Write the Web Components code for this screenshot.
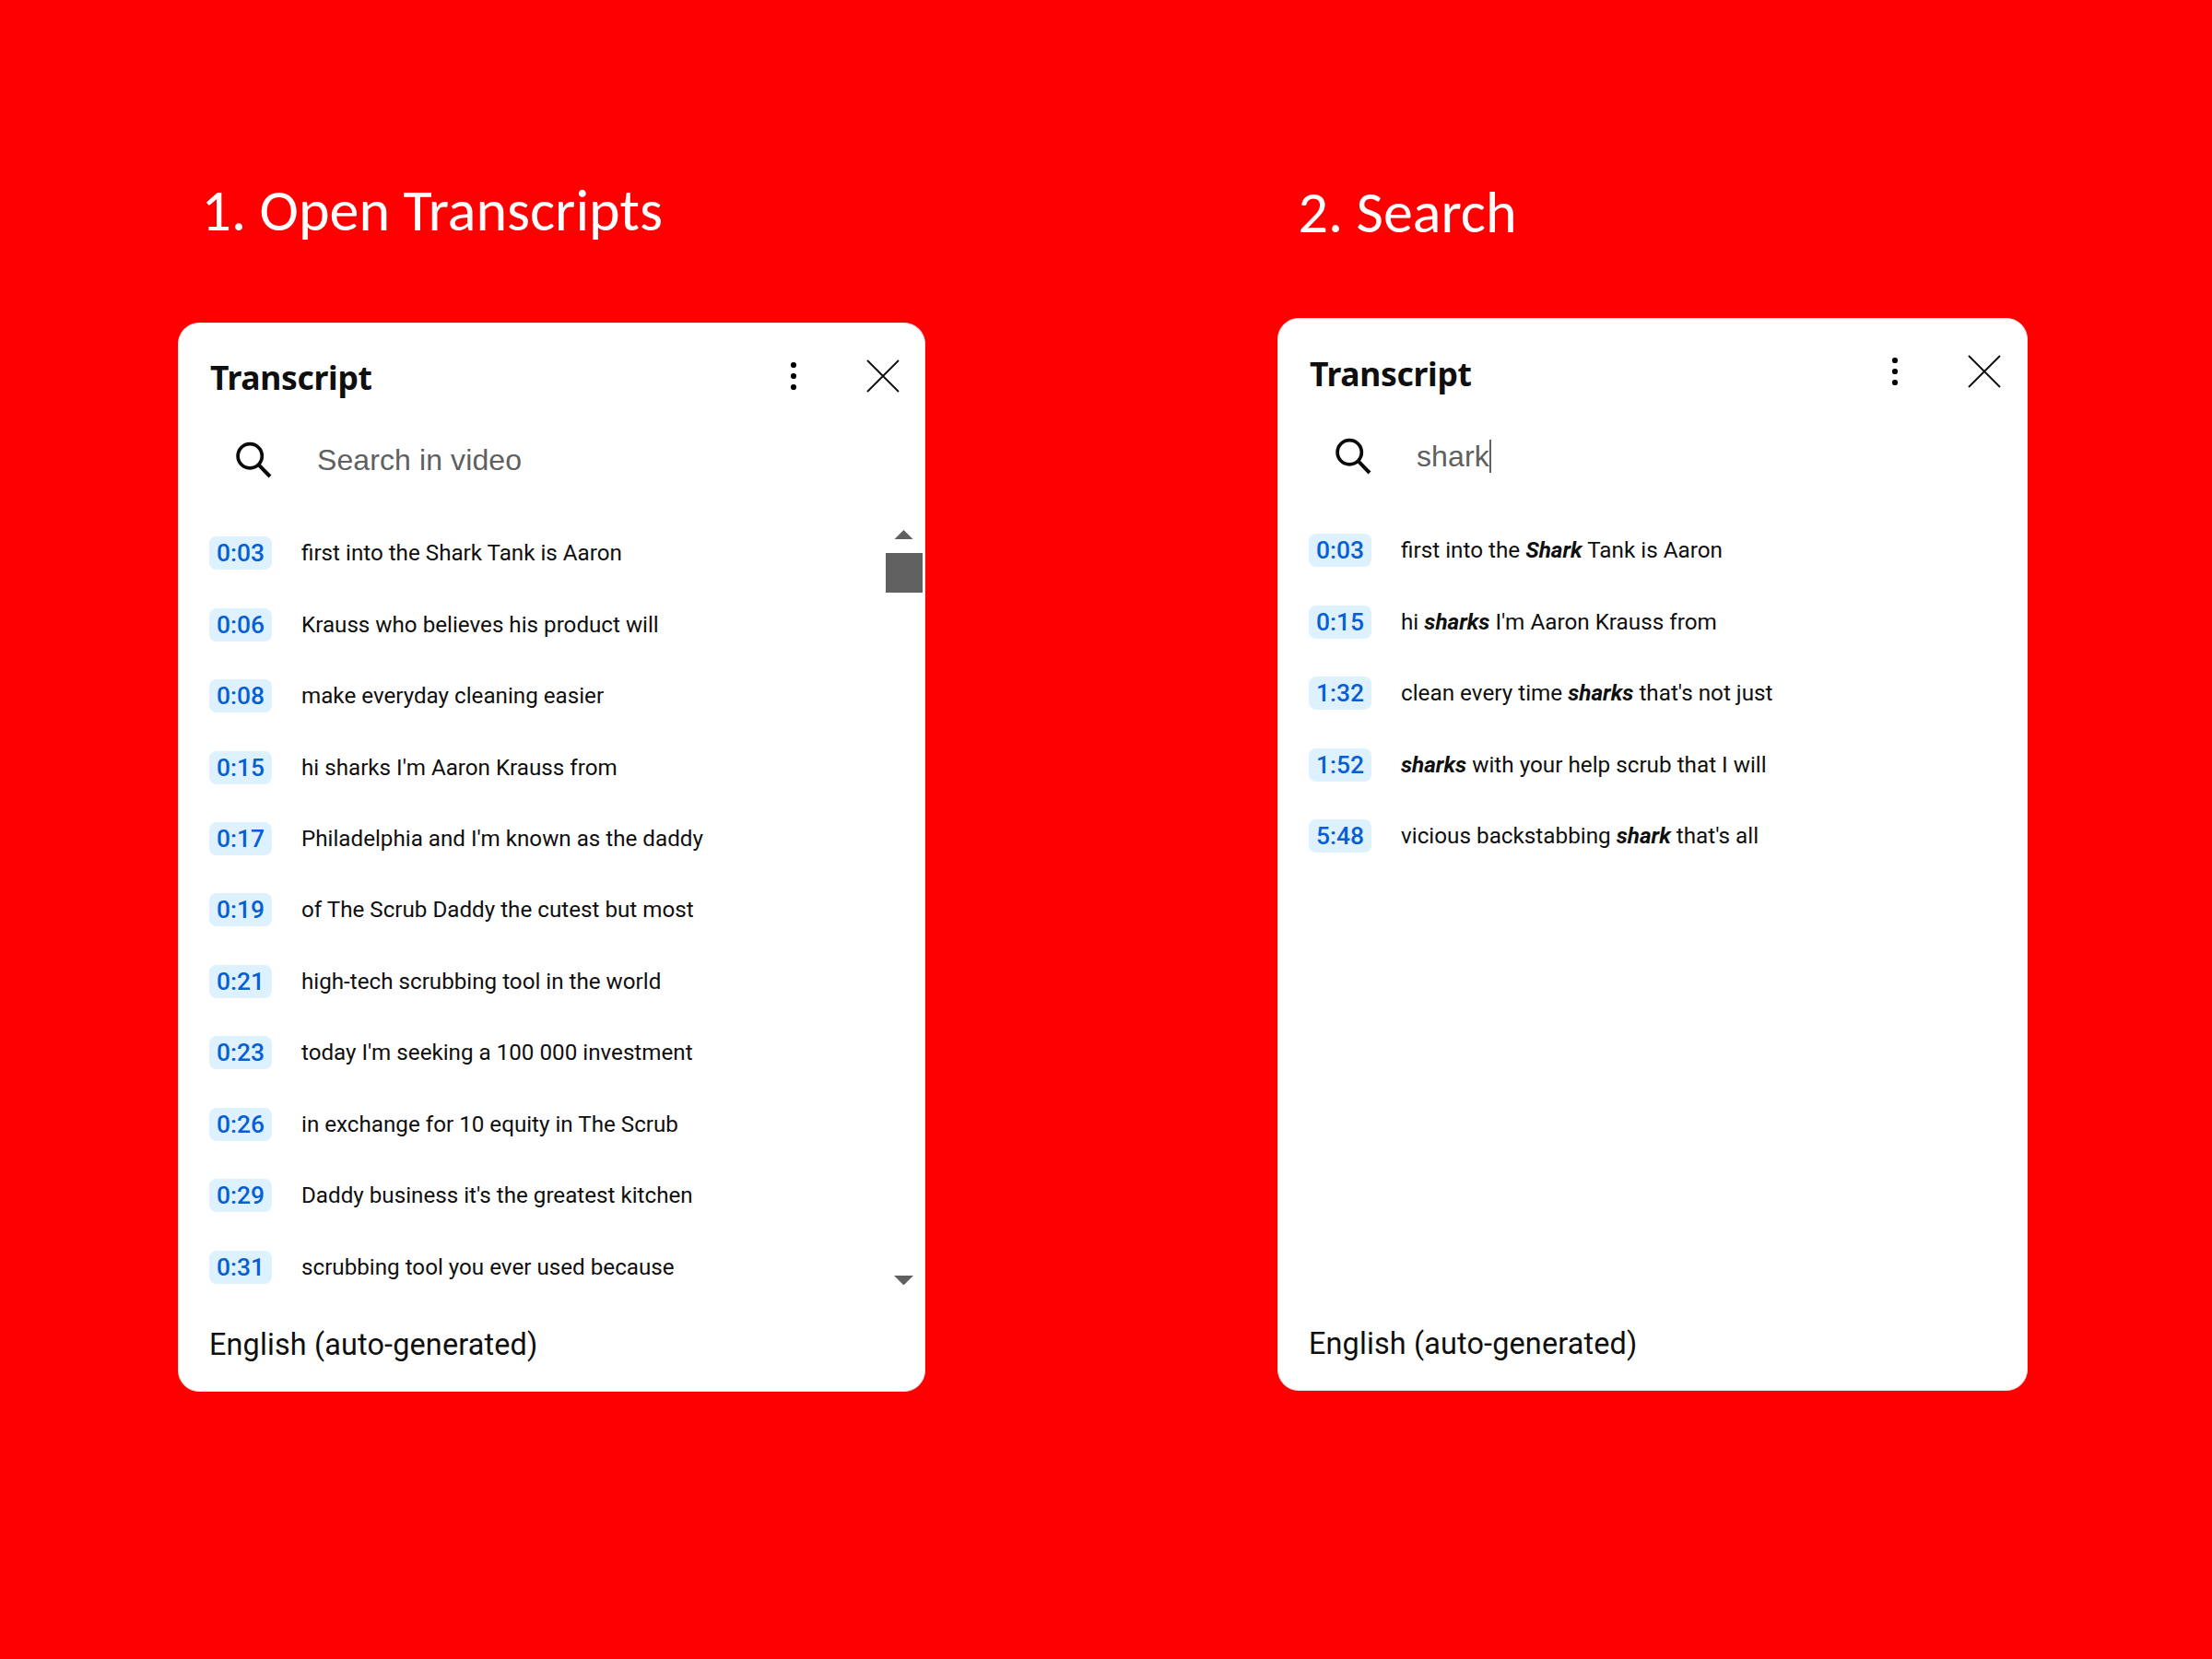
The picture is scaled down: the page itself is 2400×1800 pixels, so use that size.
<!DOCTYPE html>
<html lang="en">
<head>
<meta charset="utf-8">
<title>Search in transcripts</title>
<style>
  body {
    margin: 0;
    width: 2400px;
    height: 1800px;
    background: #ff0000;
    overflow: hidden;
  }
  main {
    display: flex;
    align-items: flex-start;
    gap: 382px;
    padding-left: 193px;
  }
  #open {
    --step-top: 188px;
    --step-gap: 82px;
    --step-indent: 25.5px;
    --panel-width: 811px;
    --panel-height: 1160px;
    --header-height: 113px;
    --header-right: 27px;
    --list-top: 30px;
    --line-height: 77.45px;
    --line-size: 24.2px;
    --footer-height: 100px;
  }
  #search {
    --step-top: 190px;
    --step-gap: 75px;
    --step-indent: 22.5px;
    --panel-width: 814px;
    --panel-height: 1163.5px;
    --header-height: 114px;
    --header-right: 28px;
    --list-top: 31px;
    --line-height: 77.5px;
    --line-size: 24.28px;
    --footer-height: 99px;
  }
</style>
</head>
<body>

<main>
  <guide-step id="open">
    <span slot="title">1. Open Transcripts</span>
    <transcript-panel scrollbar>
      <search-field slot="search">Search in video</search-field>
      <transcript-line time="0:03">first into the Shark Tank is Aaron</transcript-line>
      <transcript-line time="0:06">Krauss who believes his product will</transcript-line>
      <transcript-line time="0:08">make everyday cleaning easier</transcript-line>
      <transcript-line time="0:15">hi sharks I'm Aaron Krauss from</transcript-line>
      <transcript-line time="0:17">Philadelphia and I'm known as the daddy</transcript-line>
      <transcript-line time="0:19">of The Scrub Daddy the cutest but most</transcript-line>
      <transcript-line time="0:21">high-tech scrubbing tool in the world</transcript-line>
      <transcript-line time="0:23">today I'm seeking a 100 000 investment</transcript-line>
      <transcript-line time="0:26">in exchange for 10 equity in The Scrub</transcript-line>
      <transcript-line time="0:29">Daddy business it's the greatest kitchen</transcript-line>
      <transcript-line time="0:31">scrubbing tool you ever used because</transcript-line>
    </transcript-panel>
  </guide-step>

  <guide-step id="search">
    <span slot="title">2. Search</span>
    <transcript-panel>
      <search-field slot="search" caret>shark</search-field>
      <transcript-line time="0:03">first into the <b>Shark</b> Tank is Aaron</transcript-line>
      <transcript-line time="0:15">hi <b>sharks</b> I'm Aaron Krauss from</transcript-line>
      <transcript-line time="1:32">clean every time <b>sharks</b> that's not just</transcript-line>
      <transcript-line time="1:52"><b>sharks</b> with your help scrub that I will</transcript-line>
      <transcript-line time="5:48">vicious backstabbing <b>shark</b> that's all</transcript-line>
    </transcript-panel>
  </guide-step>
</main>

<script>
// A numbered heading with the panel it describes below it
class GuideStep extends HTMLElement {
  constructor() {
    super();
    this.attachShadow({ mode: 'open' }).innerHTML = `
      <style>
        :host {
          display: flex;
          flex-direction: column;
          gap: var(--step-gap);
          width: var(--panel-width);
          padding-top: var(--step-top);
        }
        h1 {
          margin: 0;
          padding-left: var(--step-indent);
          font: 400 64px/80px Carlito, Calibri, Lato, sans-serif;
          color: #fff;
          white-space: nowrap;
        }
      </style>
      <h1><slot name="title"></slot></h1>
      <slot></slot>
    `;
  }
}
customElements.define('guide-step', GuideStep);

// White card: header, search row, list of lines, language footer
class TranscriptPanel extends HTMLElement {
  constructor() {
    super();
    this.attachShadow({ mode: 'open' }).innerHTML = `
      <style>
        :host {
          display: flex;
          flex-direction: column;
          box-sizing: border-box;
          height: var(--panel-height);
          background: #fff;
          border: 1px solid #e5e5e5;
          border-radius: 23px;
          color: #0f0f0f;
        }
        header {
          display: flex;
          align-items: center;
          height: var(--header-height);
          padding: 0 var(--header-right) 0 34px;
          margin-bottom: 1.5px;
        }
        h2 {
          flex: 1;
          margin: 0;
          padding-top: 3px;
          font: 700 35.5px/48px "Noto Sans", "Open Sans", sans-serif;
          letter-spacing: -0.3px;
        }
        header svg {
          display: block;
          width: 36px;
          height: 36px;
        }
        .close {
          margin-left: 61px;
        }
        .body {
          flex: 1;
          display: flex;
          min-height: 0;
          margin-top: var(--list-top);
        }
        .lines {
          flex: 1;
          padding-left: 33px;
        }
        .scrollbar {
          display: none;
          flex-direction: column;
          align-items: center;
          gap: 15px;
          width: 40px;
          padding: 13px 0 15px;
          margin-right: 2px;
        }
        :host([scrollbar]) .scrollbar {
          display: flex;
        }
        .scrollbar svg {
          display: block;
          width: 21px;
          height: 10.5px;
          margin-left: -1px;
          fill: #606060;
        }
        .thumb {
          width: 40px;
          height: 43px;
          background: #606060;
        }
        .scrollbar .down {
          margin-top: auto;
        }
        footer {
          display: flex;
          align-items: center;
          height: var(--footer-height);
          padding-left: 33px;
          font: 370 32.4px/40px Roboto, sans-serif;
          letter-spacing: 0.15px;
        }
      </style>
      <header>
        <h2>Transcript</h2>
        <svg class="menu" viewBox="0 0 36 36">
          <circle cx="18" cy="6" r="3.1"/>
          <circle cx="18" cy="18" r="3.1"/>
          <circle cx="18" cy="30" r="3.1"/>
        </svg>
        <svg class="close" viewBox="0 0 36 36">
          <path d="M1 1L35 35M35 1L1 35" fill="none" stroke="#0f0f0f" stroke-width="1.9"/>
        </svg>
      </header>
      <slot name="search"></slot>
      <div class="body">
        <div class="lines"><slot></slot></div>
        <div class="scrollbar">
          <svg viewBox="0 0 21 10.5"><path d="M0 10.5L10.5 0L21 10.5z"/></svg>
          <div class="thumb"></div>
          <svg class="down" viewBox="0 0 21 10.5"><path d="M0 0L10.5 10.5L21 0z"/></svg>
        </div>
      </div>
      <footer>English (auto-generated)</footer>
    `;
  }
}
customElements.define('transcript-panel', TranscriptPanel);

// Magnifier and the query; the caret attribute draws a text cursor
class SearchField extends HTMLElement {
  constructor() {
    super();
    this.attachShadow({ mode: 'open' }).innerHTML = `
      <style>
        :host {
          display: flex;
          align-items: center;
          height: 66px;
          padding-left: 62px;
          font: 400 32px/36px "Liberation Sans", Arial, sans-serif;
          letter-spacing: 0.1px;
          color: #606060;
        }
        svg {
          display: block;
          width: 39px;
          height: 40px;
          margin-right: 49px;
        }
        i {
          display: none;
          width: 2px;
          height: 36px;
          background: #606060;
        }
        :host([caret]) i {
          display: block;
        }
      </style>
      <svg viewBox="0 0 39 40" fill="none" stroke="#0a0a0a">
        <circle cx="15.2" cy="15.7" r="13.1" stroke-width="3.7"/>
        <path d="M24.5 25.2L37 38" stroke-width="4"/>
      </svg>
      <span><slot></slot></span>
      <i></i>
    `;
  }
}
customElements.define('search-field', SearchField);

// One timed line of the transcript
class TranscriptLine extends HTMLElement {
  constructor() {
    super();
    this.attachShadow({ mode: 'open' }).innerHTML = `
      <style>
        :host {
          display: flex;
          align-items: center;
          gap: 32px;
          height: var(--line-height);
          font: 370 var(--line-size)/36px Roboto, sans-serif;
          color: #0f0f0f;
          white-space: nowrap;
        }
        .time {
          width: 68px;
          height: 36px;
          border-radius: 8px;
          background: #def1ff;
          color: #065fd4;
          font-size: 26.4px;
          font-weight: 500;
          text-align: center;
        }
        ::slotted(b) {
          font-weight: 700;
          font-style: italic;
        }
      </style>
      <div class="time"></div>
      <div class="text"><slot></slot></div>
    `;
  }

  connectedCallback() {
    this.shadowRoot.querySelector('.time').textContent = this.getAttribute('time');
  }
}
customElements.define('transcript-line', TranscriptLine);
</script>
</body>
</html>
